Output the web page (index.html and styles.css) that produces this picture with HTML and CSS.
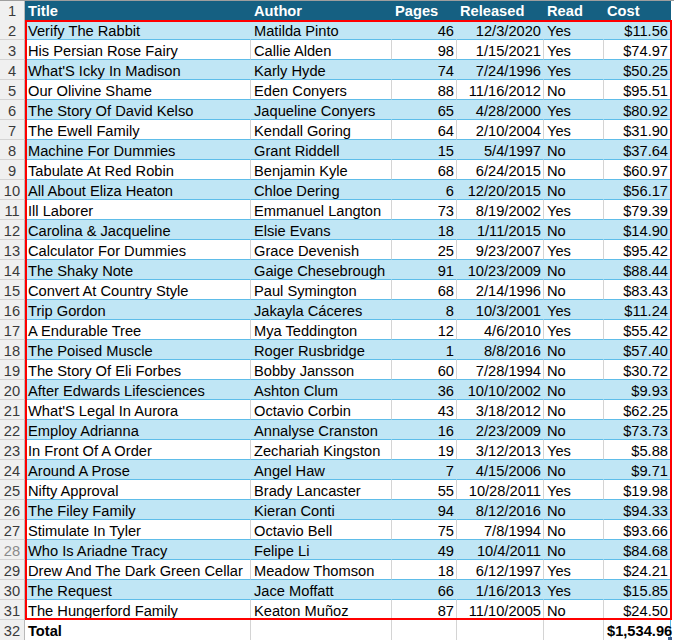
FILE: index.html
```html
<!DOCTYPE html>
<html>
<head>
<meta charset="utf-8">
<link rel="stylesheet" href="styles.css">
</head>
<body>
<div class="sheet">
  <div class="row head">
    <div class="rn">1</div><div class="c">Title</div><div class="c">Author</div><div class="c">Pages</div><div class="c">Released</div><div class="c">Read</div><div class="c">Cost</div>
  </div>
  <div class="row band"><div class="rn">2</div><div class="c">Verify The Rabbit</div><div class="c">Matilda Pinto</div><div class="c r">46</div><div class="c r">12/3/2020</div><div class="c">Yes</div><div class="c r">$11.56</div></div>
  <div class="row"><div class="rn">3</div><div class="c">His Persian Rose Fairy</div><div class="c">Callie Alden</div><div class="c r">98</div><div class="c r">1/15/2021</div><div class="c">Yes</div><div class="c r">$74.97</div></div>
  <div class="row band"><div class="rn">4</div><div class="c">What'S Icky In Madison</div><div class="c">Karly Hyde</div><div class="c r">74</div><div class="c r">7/24/1996</div><div class="c">Yes</div><div class="c r">$50.25</div></div>
  <div class="row"><div class="rn">5</div><div class="c">Our Olivine Shame</div><div class="c">Eden Conyers</div><div class="c r">88</div><div class="c r">11/16/2012</div><div class="c">No</div><div class="c r">$95.51</div></div>
  <div class="row band"><div class="rn">6</div><div class="c">The Story Of David Kelso</div><div class="c">Jaqueline Conyers</div><div class="c r">65</div><div class="c r">4/28/2000</div><div class="c">Yes</div><div class="c r">$80.92</div></div>
  <div class="row"><div class="rn">7</div><div class="c">The Ewell Family</div><div class="c">Kendall Goring</div><div class="c r">64</div><div class="c r">2/10/2004</div><div class="c">Yes</div><div class="c r">$31.90</div></div>
  <div class="row band"><div class="rn">8</div><div class="c">Machine For Dummies</div><div class="c">Grant Riddell</div><div class="c r">15</div><div class="c r">5/4/1997</div><div class="c">No</div><div class="c r">$37.64</div></div>
  <div class="row"><div class="rn">9</div><div class="c">Tabulate At Red Robin</div><div class="c">Benjamin Kyle</div><div class="c r">68</div><div class="c r">6/24/2015</div><div class="c">No</div><div class="c r">$60.97</div></div>
  <div class="row band"><div class="rn">10</div><div class="c">All About Eliza Heaton</div><div class="c">Chloe Dering</div><div class="c r">6</div><div class="c r">12/20/2015</div><div class="c">No</div><div class="c r">$56.17</div></div>
  <div class="row"><div class="rn">11</div><div class="c">Ill Laborer</div><div class="c">Emmanuel Langton</div><div class="c r">73</div><div class="c r">8/19/2002</div><div class="c">Yes</div><div class="c r">$79.39</div></div>
  <div class="row band"><div class="rn">12</div><div class="c">Carolina &amp; Jacqueline</div><div class="c">Elsie Evans</div><div class="c r">18</div><div class="c r">1/11/2015</div><div class="c">No</div><div class="c r">$14.90</div></div>
  <div class="row"><div class="rn">13</div><div class="c">Calculator For Dummies</div><div class="c">Grace Devenish</div><div class="c r">25</div><div class="c r">9/23/2007</div><div class="c">Yes</div><div class="c r">$95.42</div></div>
  <div class="row band"><div class="rn">14</div><div class="c">The Shaky Note</div><div class="c">Gaige Chesebrough</div><div class="c r">91</div><div class="c r">10/23/2009</div><div class="c">No</div><div class="c r">$88.44</div></div>
  <div class="row"><div class="rn">15</div><div class="c">Convert At Country Style</div><div class="c">Paul Symington</div><div class="c r">68</div><div class="c r">2/14/1996</div><div class="c">No</div><div class="c r">$83.43</div></div>
  <div class="row band"><div class="rn">16</div><div class="c">Trip Gordon</div><div class="c">Jakayla Cáceres</div><div class="c r">8</div><div class="c r">10/3/2001</div><div class="c">Yes</div><div class="c r">$11.24</div></div>
  <div class="row"><div class="rn">17</div><div class="c">A Endurable Tree</div><div class="c">Mya Teddington</div><div class="c r">12</div><div class="c r">4/6/2010</div><div class="c">Yes</div><div class="c r">$55.42</div></div>
  <div class="row band"><div class="rn">18</div><div class="c">The Poised Muscle</div><div class="c">Roger Rusbridge</div><div class="c r">1</div><div class="c r">8/8/2016</div><div class="c">No</div><div class="c r">$57.40</div></div>
  <div class="row"><div class="rn">19</div><div class="c">The Story Of Eli Forbes</div><div class="c">Bobby Jansson</div><div class="c r">60</div><div class="c r">7/28/1994</div><div class="c">No</div><div class="c r">$30.72</div></div>
  <div class="row band"><div class="rn">20</div><div class="c">After Edwards Lifesciences</div><div class="c">Ashton Clum</div><div class="c r">36</div><div class="c r">10/10/2002</div><div class="c">No</div><div class="c r">$9.93</div></div>
  <div class="row"><div class="rn">21</div><div class="c">What'S Legal In Aurora</div><div class="c">Octavio Corbin</div><div class="c r">43</div><div class="c r">3/18/2012</div><div class="c">No</div><div class="c r">$62.25</div></div>
  <div class="row band"><div class="rn">22</div><div class="c">Employ Adrianna</div><div class="c">Annalyse Cranston</div><div class="c r">16</div><div class="c r">2/23/2009</div><div class="c">No</div><div class="c r">$73.73</div></div>
  <div class="row"><div class="rn">23</div><div class="c">In Front Of A Order</div><div class="c">Zechariah Kingston</div><div class="c r">19</div><div class="c r">3/12/2013</div><div class="c">Yes</div><div class="c r">$5.88</div></div>
  <div class="row band"><div class="rn">24</div><div class="c">Around A Prose</div><div class="c">Angel Haw</div><div class="c r">7</div><div class="c r">4/15/2006</div><div class="c">No</div><div class="c r">$9.71</div></div>
  <div class="row"><div class="rn">25</div><div class="c">Nifty Approval</div><div class="c">Brady Lancaster</div><div class="c r">55</div><div class="c r">10/28/2011</div><div class="c">Yes</div><div class="c r">$19.98</div></div>
  <div class="row band"><div class="rn">26</div><div class="c">The Filey Family</div><div class="c">Kieran Conti</div><div class="c r">94</div><div class="c r">8/12/2016</div><div class="c">No</div><div class="c r">$94.33</div></div>
  <div class="row"><div class="rn">27</div><div class="c">Stimulate In Tyler</div><div class="c">Octavio Bell</div><div class="c r">75</div><div class="c r">7/8/1994</div><div class="c">No</div><div class="c r">$93.66</div></div>
  <div class="row band"><div class="rn dim">28</div><div class="c">Who Is Ariadne Tracy</div><div class="c">Felipe Li</div><div class="c r">49</div><div class="c r">10/4/2011</div><div class="c">No</div><div class="c r">$84.68</div></div>
  <div class="row"><div class="rn">29</div><div class="c">Drew And The Dark Green Cellar</div><div class="c">Meadow Thomson</div><div class="c r">18</div><div class="c r">6/12/1997</div><div class="c">Yes</div><div class="c r">$24.21</div></div>
  <div class="row band"><div class="rn">30</div><div class="c">The Request</div><div class="c">Jace Moffatt</div><div class="c r">66</div><div class="c r">1/16/2013</div><div class="c">Yes</div><div class="c r">$15.85</div></div>
  <div class="row"><div class="rn">31</div><div class="c">The Hungerford Family</div><div class="c">Keaton Muñoz</div><div class="c r">87</div><div class="c r">11/10/2005</div><div class="c">No</div><div class="c r">$24.50</div></div>
  <div class="row total"><div class="rn">32</div><div class="c b">Total</div><div class="c"></div><div class="c"></div><div class="c"></div><div class="c"></div><div class="c r b sel">$1,534.96</div></div>
  <div class="redbox"></div>
  <div class="handle"></div>
</div>
</body>
</html>
```
FILE: styles.css
```css
html, body {
  margin: 0;
  padding: 0;
  background: #ffffff;
}
.sheet {
  position: relative;
  width: 674px;
  border-top: 1px solid #9e9e9e;
  font-family: "Liberation Sans Narrow", "Arial Narrow", "Liberation Sans", Arial, sans-serif;
  font-size: 14.67px;
  color: #000;
}
.row {
  display: grid;
  grid-template-columns: 25px 226px 141px 65px 87px 60px 67px;
  height: 20px;
}
.row.head {
  height: 19px;
}
.c, .rn {
  box-sizing: border-box;
  height: 100%;
  line-height: 17px;
  padding: 3px 3px 0 3px;
  white-space: nowrap;
  overflow: hidden;
  border-bottom: 1px solid #5ebde9;
  border-right: 1px solid #d4d4d4;
}
.c.r {
  padding-right: 2px;
}
.rn {
  background: #f0f0f0;
  color: #3a3a3a;
  text-align: center;
  padding: 3px 0 0 0;
  border-bottom: 1px solid #d4d4d4;
  border-right: 1px solid #b9b9b9;
}
.rn.dim {
  color: #8a8a8a;
}
.head .c {
  background: #156082;
  color: #ffffff;
  font-weight: bold;
  border-right: none;
  border-bottom: none;
  padding-top: 2px;
}
.head .rn {
  border-bottom: none;
  padding-top: 2px;
}
.band .c {
  background: #c0e6f5;
  border-right-color: #c0e6f5;
}
.row > .c:last-child {
  border-right: 1px solid #5ebde9;
}
.head > .c:last-child {
  border-right: 1px solid #156082;
}
.r {
  text-align: right;
}
.b {
  font-weight: bold;
}
.sel {
  overflow: visible;
  padding-right: 3px;
}
.total .c {
  border-bottom: 1px solid #5ebde9;
}
.redbox {
  position: absolute;
  left: 25px;
  top: 19px;
  width: 647px;
  height: 600px;
  box-sizing: border-box;
  border: 2px solid #ff0000;
  pointer-events: none;
}
.handle {
  position: absolute;
  left: 668px;
  top: 636px;
  width: 4px;
  height: 4px;
  background: #3b5a8a;
}
```
